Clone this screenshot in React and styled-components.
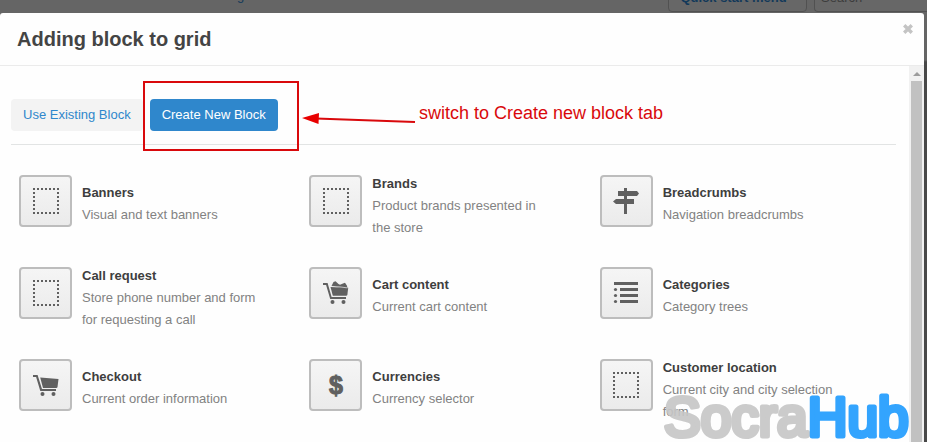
import React, { useState } from 'react';
import styled, { createGlobalStyle } from 'styled-components';

const GlobalStyle = createGlobalStyle`
  * {
    box-sizing: border-box;
  }
  body {
    margin: 0;
    background: #656565;
    font-family: "Liberation Sans", Arial, sans-serif;
    font-size: 13px;
    color: #444;
  }
`

const Page = styled.div`
  position: relative;
  display: flex;
  flex-direction: column;
  min-height: 100vh;
  padding-right: 3px;
  overflow: hidden;
  background: linear-gradient(#656565 60px, #484848 62px);
`

/* the page behind the dialog, only its bottom edge shows */
const Behind = styled.div`
  display: flex;
  align-items: flex-end;
  gap: 7px;
  height: 13px;
  padding-bottom: 1px;
  margin-right: -3px;
  overflow: hidden;
`

const BehindLink = styled.a`
  margin: 0 auto 9px 237px;
  line-height: 15px;
  color: #12395a;
  text-decoration: none;
`

const QuickMenu = styled.button`
  width: 139px;
  height: 28px;
  padding: 0 8px 2px 0;
  border: 1px solid #515151;
  border-radius: 4px;
  background: #676767;
  color: #12395a;
  font: bold 13px "Liberation Sans", Arial, sans-serif;
`

const SearchBox = styled.input`
  width: 113px;
  height: 28px;
  padding: 0 6px 2px;
  border: 1px solid #515151;
  border-right: 0;
  border-radius: 4px 0 0 4px;
  background: #676767;
  font: 13px "Liberation Sans", Arial, sans-serif;
  &::placeholder {
    color: #3c3c3c;
  }
`

const Dialog = styled.section`
  flex: 1;
  display: flex;
  flex-direction: column;
  border-radius: 3px 3px 0 0;
  background: #fefefe;
`

const DialogHeader = styled.header`
  display: flex;
  justify-content: space-between;
  align-items: flex-start;
  padding: 11px 11px 11px 17px;
  border-bottom: 1px solid #ebebeb;
`

const Title = styled.h1`
  margin: 0;
  font-size: 20px;
  line-height: 30px;
`

const CloseButton = styled.button`
  display: flex;
  padding: 0;
  border: 0;
  background: none;
  color: #c4c4c4;
  cursor: pointer;
`

const DialogBody = styled.div`
  flex: 1;
  display: flex;
  position: relative;
`

const Content = styled.main`
  flex: 1;
  padding: 33px 13px 20px 11px;
`

const Tabs = styled.nav`
  display: flex;
  gap: 7px;
  padding-bottom: 13px;
  border-bottom: 1px solid #e2e4e4;
`

const Tab = styled.button`
  height: 32px;
  padding: 0 12px 1px;
  border: 0;
  border-radius: 4px;
  background: ${props => props.$active ? '#2f87cc' : '#f3f3f3'};
  color: ${props => props.$active ? '#fff' : '#2f87cc'};
  font: 13px "Liberation Sans", Arial, sans-serif;
  cursor: pointer;
`

const BlockGrid = styled.div`
  display: grid;
  grid-template-columns: repeat(3, 1fr);
  row-gap: 26px;
  margin: 28px 6px 0 8px;
`

const Block = styled.div`
  display: flex;
  align-items: flex-start;
  gap: 10px;
`

const IconBox = styled.div`
  flex: none;
  display: flex;
  align-items: center;
  justify-content: center;
  width: 53px;
  height: 52px;
  margin-top: 2px;
  border: 2px solid #bdbdbd;
  border-radius: 4px;
  background: linear-gradient(#f5f5f5, #ebebeb);
  color: #606060;
`

const BlockText = styled.div`
  display: flex;
  flex-direction: column;
  justify-content: center;
  min-height: 62px;
  max-width: 180px;
  line-height: 22px;
`

const BlockName = styled.strong`
  color: #3e3e3e;
`

const BlockInfo = styled.span`
  color: #828282;
`

const Scrollbar = styled.div`
  width: 15px;
  padding: 0 2px;
  background: #f1f1f1;
  &::before {
    content: "";
    display: block;
    width: 0;
    margin: 6px auto 5px;
    border: 4px solid transparent;
    border-top: 0;
    border-bottom-color: #9c9c9c;
  }
`

const Thumb = styled.div`
  height: calc(100% - 15px);
  background: #c1c1c1;
`

/* red marks drawn over the dialog */
const Highlight = styled.div`
  position: absolute;
  top: 15px;
  left: 143px;
  width: 156px;
  height: 70px;
  border: 2px solid #d9090c;
  pointer-events: none;
`

const Note = styled.div`
  position: absolute;
  top: 36px;
  left: 302px;
  display: flex;
  gap: 3px;
  color: #d9090c;
  font-size: 18px;
  line-height: 22px;
  pointer-events: none;
`

const Watermark = styled.svg`
  position: absolute;
  right: 14px;
  bottom: 0;
  opacity: 0.9;
  pointer-events: none;
`

const icons = {
  blank: (
    <svg width="26" height="26" viewBox="0 0 26 26" fill="none" stroke="currentColor" strokeWidth="2">
      <path d="M0 1H26M0 25H26M1 4V24M25 4V24" strokeDasharray="2 2" />
    </svg>
  ),
  sign: (
    <svg width="26" height="26" viewBox="0 0 26 26" fill="currentColor">
      <path d="M11 0h3v3h10l2 2.500-2 2.500H14v3h7v5h-7v10h-3V16H3l-3-2.500L3 11h8V8H5V3h6z" />
    </svg>
  ),
  list: (
    <svg width="26" height="24" viewBox="0 0 26 24" fill="currentColor">
      <path d="M1 1h24v3H1zM7 7h18v3H7zM7 13h18v3H7zM7 19h18v3H7z" />
      <circle cx="2.500" cy="8.500" r="1.600" />
      <circle cx="2.500" cy="14.500" r="1.600" />
      <circle cx="2.500" cy="20.500" r="1.600" />
    </svg>
  ),
  cart: (
    <svg width="26" height="24" viewBox="0 0 26 24" fill="currentColor">
      <path d="M0 2h4.600l4.400 14H23v2H7.300L3.100 4H0zM7.200 4.500l18.300 1.500-1 8q-.2 1-1.300 1H10z" />
      <circle cx="9.500" cy="21" r="2" />
      <circle cx="20.500" cy="21" r="2" />
    </svg>
  ),
  fullCart: (
    <svg width="26" height="24" viewBox="0 0 26 24" fill="currentColor">
      <path d="M0 2h4.600l4 14H23v1.900H7.200L3.100 4H0z" />
      <path d="M7.500 6l17.700.7-.8 7q-.2 1.100-1.300 1.100H9.800z" />
      <path d="M8.500 5L10.500 1l2-.8 3 2.800 1.500.8 3-1.300 2-.7 2 3 .5 2.900-8-1z" />
      <path d="M8 5.300l9 .6 7.500 1" fill="none" stroke="#eee" strokeWidth=".7" />
      <circle cx="9.500" cy="21" r="2" />
      <circle cx="20.500" cy="21" r="2" />
    </svg>
  ),
}

const Dollar = styled.span`
  font-size: 25px;
  font-weight: bold;
  line-height: 28px;
  -webkit-text-stroke: 1px currentColor;
`

const blocks = [
  { name: 'Banners', info: 'Visual and text banners', icon: icons.blank },
  { name: 'Brands', info: 'Product brands presented in the store', icon: icons.blank },
  { name: 'Breadcrumbs', info: 'Navigation breadcrumbs', icon: icons.sign },
  { name: 'Call request', info: 'Store phone number and form for requesting a call', icon: icons.blank },
  { name: 'Cart content', info: 'Current cart content', icon: icons.fullCart },
  { name: 'Categories', info: 'Category trees', icon: icons.list },
  { name: 'Checkout', info: 'Current order information', icon: icons.cart },
  { name: 'Currencies', info: 'Currency selector', icon: <Dollar>$</Dollar> },
  { name: 'Customer location', info: 'Current city and city selection form', icon: icons.blank },
]

function App() {
  const [tab, setTab] = useState('new')

  return (
    <Page>
      <GlobalStyle />
      <Behind>
        <BehindLink href="#">g</BehindLink>
        <QuickMenu>Quick start menu</QuickMenu>
        <SearchBox placeholder="Search" aria-label="Search" />
      </Behind>

      <Dialog role="dialog" aria-labelledby="dialog-title">
        <DialogHeader>
          <Title id="dialog-title">Adding block to grid</Title>
          <CloseButton aria-label="Close">
            <svg width="10" height="10" viewBox="0 0 10 10" stroke="currentColor" strokeWidth="3.400">
              <path d="M1.200 1.200l7.600 7.600M8.800 1.200L1.200 8.800" />
            </svg>
          </CloseButton>
        </DialogHeader>

        <DialogBody>
          <Content>
            <Tabs>
              <Tab $active={tab === 'existing'} onClick={() => setTab('existing')}>Use Existing Block</Tab>
              <Tab $active={tab === 'new'} onClick={() => setTab('new')}>Create New Block</Tab>
            </Tabs>
            <BlockGrid>
              {blocks.map(block => (
                <Block key={block.name}>
                  <IconBox>{block.icon}</IconBox>
                  <BlockText>
                    <BlockName>{block.name}</BlockName>
                    <BlockInfo>{block.info}</BlockInfo>
                  </BlockText>
                </Block>
              ))}
            </BlockGrid>
          </Content>
          <Scrollbar>
            <Thumb />
          </Scrollbar>

          <Highlight />
          <Note>
            <svg width="114" height="24" viewBox="0 0 114 24">
              <path d="M14 16.500L113 20" stroke="#d9090c" strokeWidth="2" />
              <path d="M0 16l17-5-.5 11z" fill="#e80000" />
            </svg>
            switch to Create new block tab
          </Note>
        </DialogBody>
      </Dialog>

      <Watermark width="252" height="56" viewBox="0 0 252 56">
        <text
          x="3"
          y="49"
          fontSize="55"
          strokeWidth="5"
          strokeLinejoin="round"
          fill="#c6c6c6"
          stroke="#c6c6c6"
        >
          Socra<tspan fill="#1e9bff" stroke="#1e9bff">Hub</tspan>
        </text>
      </Watermark>
    </Page>
  );
}

export default App;
